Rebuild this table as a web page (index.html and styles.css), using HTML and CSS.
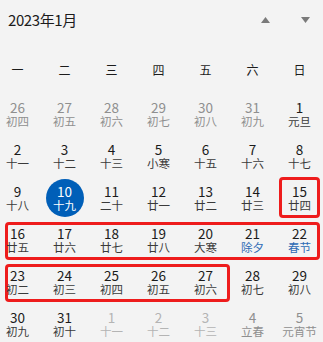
FILE: index.html
```html
<!DOCTYPE html>
<html lang="zh-CN">
<head>
<meta charset="utf-8">
<link rel="stylesheet" href="styles.css">
</head>
<body>
<div class="cal">
  <div class="head">
    <div class="title">2023年1月</div>
    <div class="nav">
      <svg class="arrow" width="9" height="6" viewBox="0 0 9 6"><path d="M4.5 0 L9 6 L0 6 Z"/></svg>
      <svg class="arrow" width="9" height="6" viewBox="0 0 9 6"><path d="M0 0 L9 0 L4.5 6 Z"/></svg>
    </div>
  </div>
  <div class="grid week">
    <div>一</div><div>二</div><div>三</div><div>四</div><div>五</div><div>六</div><div>日</div>
  </div>
  <div class="grid days">
    <div class="day out"><span class="n">26</span><span class="l">初四</span></div>
    <div class="day out"><span class="n">27</span><span class="l">初五</span></div>
    <div class="day out"><span class="n">28</span><span class="l">初六</span></div>
    <div class="day out"><span class="n">29</span><span class="l">初七</span></div>
    <div class="day out"><span class="n">30</span><span class="l">初八</span></div>
    <div class="day out"><span class="n">31</span><span class="l">初九</span></div>
    <div class="day"><span class="n">1</span><span class="l">元旦</span></div>

    <div class="day"><span class="n">2</span><span class="l">十一</span></div>
    <div class="day"><span class="n">3</span><span class="l">十二</span></div>
    <div class="day"><span class="n">4</span><span class="l">十三</span></div>
    <div class="day"><span class="n">5</span><span class="l">小寒</span></div>
    <div class="day"><span class="n">6</span><span class="l">十五</span></div>
    <div class="day"><span class="n">7</span><span class="l">十六</span></div>
    <div class="day"><span class="n">8</span><span class="l">十七</span></div>

    <div class="day"><span class="n">9</span><span class="l">十八</span></div>
    <div class="day today"><span class="n">10</span><span class="l">十九</span></div>
    <div class="day"><span class="n">11</span><span class="l">二十</span></div>
    <div class="day"><span class="n">12</span><span class="l">廿一</span></div>
    <div class="day"><span class="n">13</span><span class="l">廿二</span></div>
    <div class="day"><span class="n">14</span><span class="l">廿三</span></div>
    <div class="day"><span class="n">15</span><span class="l">廿四</span></div>

    <div class="day"><span class="n">16</span><span class="l">廿五</span></div>
    <div class="day"><span class="n">17</span><span class="l">廿六</span></div>
    <div class="day"><span class="n">18</span><span class="l">廿七</span></div>
    <div class="day"><span class="n">19</span><span class="l">廿八</span></div>
    <div class="day"><span class="n">20</span><span class="l">大寒</span></div>
    <div class="day"><span class="n">21</span><span class="l fest">除夕</span></div>
    <div class="day"><span class="n">22</span><span class="l fest">春节</span></div>

    <div class="day"><span class="n">23</span><span class="l">初二</span></div>
    <div class="day"><span class="n">24</span><span class="l">初三</span></div>
    <div class="day"><span class="n">25</span><span class="l">初四</span></div>
    <div class="day"><span class="n">26</span><span class="l">初五</span></div>
    <div class="day"><span class="n">27</span><span class="l">初六</span></div>
    <div class="day"><span class="n">28</span><span class="l">初七</span></div>
    <div class="day"><span class="n">29</span><span class="l">初八</span></div>

    <div class="day"><span class="n">30</span><span class="l">初九</span></div>
    <div class="day"><span class="n">31</span><span class="l">初十</span></div>
    <div class="day next"><span class="n">1</span><span class="l">十一</span></div>
    <div class="day next"><span class="n">2</span><span class="l">十二</span></div>
    <div class="day next"><span class="n">3</span><span class="l">十三</span></div>
    <div class="day out"><span class="n">4</span><span class="l">立春</span></div>
    <div class="day out"><span class="n">5</span><span class="l">元宵节</span></div>
  </div>
  <div class="mark mark-a"></div>
  <div class="mark mark-b"></div>
  <div class="mark mark-c"></div>
</div>
</body>
</html>
```

FILE: styles.css
```css
html, body {
  margin: 0;
  padding: 0;
  background: #f3f3f3;
}
body {
  width: 323px;
  height: 342px;
  overflow: hidden;
  font-family: "Noto Sans CJK SC", "Noto Sans", sans-serif;
  color: #1b1b1b;
}
.cal {
  position: relative;
  width: 323px;
  height: 342px;
}
.head {
  display: flex;
  align-items: center;
  justify-content: space-between;
  height: 40px;
  padding: 0 13px 0 8px;
}
.title {
  font-size: 15px;
  line-height: 20px;
  letter-spacing: -0.4px;
}
.nav {
  display: flex;
  align-items: center;
  gap: 31px;
}
.arrow {
  display: block;
  fill: #7a7a7a;
}
.grid {
  display: grid;
  grid-template-columns: repeat(7, 47px);
  margin-left: -6px;
}
.week {
  margin-top: 7px;
  height: 46px;
  align-items: center;
  justify-items: center;
  font-size: 12px;
  line-height: 14px;
  color: #1b1b1b;
}
.day {
  height: 42px;
  display: flex;
  flex-direction: column;
  align-items: center;
  justify-content: center;
  position: relative;
}
.n {
  font-size: 13.5px;
  line-height: 14px;
  position: relative;
  z-index: 1;
}
.l {
  font-size: 11.5px;
  line-height: 14px;
  color: #3a3a3a;
  position: relative;
  z-index: 1;
}
.l.fest {
  color: #2d6bb5;
}
.out .n, .out .l {
  color: #8f8f8f;
}
.next .n, .next .l {
  color: #b4b4b4;
}
.today .n, .today .l {
  color: #ffffff;
}
.today::before {
  content: "";
  position: absolute;
  width: 38px;
  height: 38px;
  border-radius: 50%;
  background: #005fb8;
  left: 50%;
  top: 50%;
  transform: translate(-50%, -50%);
}
.mark {
  position: absolute;
  border: 3px solid #ee1c1c;
  border-radius: 4px;
  box-sizing: border-box;
}
.mark-a {
  left: 279px;
  top: 177px;
  width: 41px;
  height: 41px;
}
.mark-b {
  left: 5px;
  top: 222px;
  width: 315px;
  height: 38px;
}
.mark-c {
  left: 5px;
  top: 264px;
  width: 225px;
  height: 38px;
}
```
